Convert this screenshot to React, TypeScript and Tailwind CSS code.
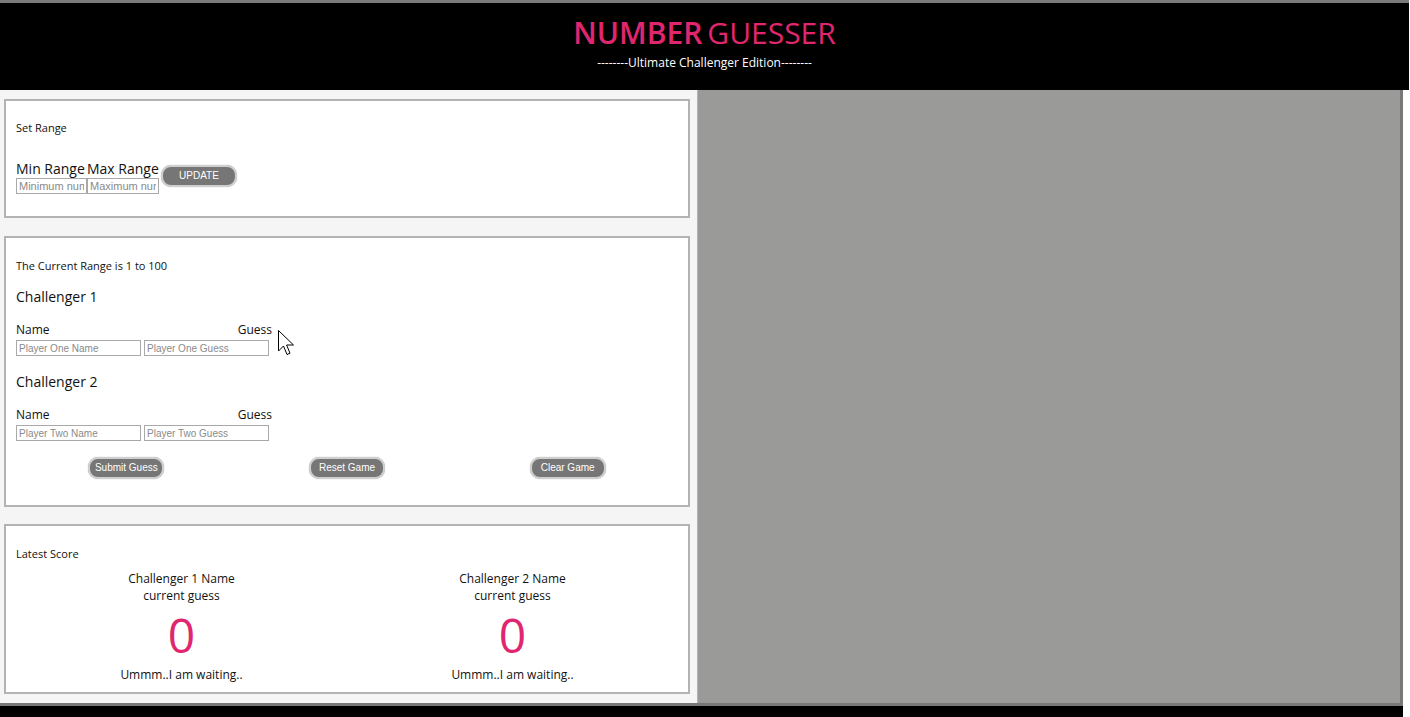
import React from 'react';

const inputCls =
  "h-[16px] border border-[#a9a9a9] bg-white px-[2px] font-['Liberation_Sans',Arial,sans-serif] text-[10px] text-[#222] outline-none placeholder:text-[#8a8a8a]";

const btnCls =
  "h-[22px] w-[76px] rounded-[10px] border-2 border-[#cfcfcf] bg-[#767676] font-['Liberation_Sans',Arial,sans-serif] text-[10px] leading-none text-white shadow-[0_0_1px_#999]";

function Cursor() {
  return (
    <svg
      className="absolute left-[278px] top-[330px]"
      width="17"
      height="26"
      viewBox="0 0 17 26"
    >
      <path
        d="M0.5 0.5 L0.5 21 L5.5 16 L9 24.5 L12 23.2 L8.6 15 L15.5 15 Z"
        fill="#fff"
        stroke="#000"
        strokeWidth="1"
        strokeLinejoin="miter"
      />
    </svg>
  );
}

function Challenger({ title, who }: { title: string; who: string }) {
  return (
    <div>
      <h3 className="text-[14px] leading-[20px]">{title}</h3>
      <div className="mt-[15px] flex w-[256px] justify-between text-[12px] font-medium leading-[16px]">
        <span>Name</span>
        <span>Guess</span>
      </div>
      <div className="mt-[2px] flex gap-[3px]">
        <input className={`${inputCls} w-[125px]`} placeholder={`Player ${who} Name`} />
        <input className={`${inputCls} w-[125px]`} placeholder={`Player ${who} Guess`} />
      </div>
    </div>
  );
}

function ScoreColumn({ name }: { name: string }) {
  return (
    <div className="flex flex-col items-center">
      <p className="text-[12px] font-medium leading-[16px]">{name}</p>
      <p className="mt-[1px] text-[12px] leading-[16px]">current guess</p>
      <p className="mt-[7px] text-[48px] leading-[48px] text-[#e0266f]">0</p>
      <p className="mt-[8px] text-[12px] leading-[16px]">Ummm..I am waiting..</p>
    </div>
  );
}

export default function App() {
  return (
    <div className="relative min-h-[717px] w-[1410px] bg-white font-['Open_Sans',sans-serif] text-[#111]">
      <div className="h-[3px] w-[1409px] bg-[#7b7b7b]" />

      {/* Header */}
      <header className="flex h-[87px] w-[1409px] flex-col items-center bg-black">
        <h1 className="mt-[10px] text-[30px] leading-[40px] text-[#e0266f]">
          <span className="font-semibold">NUMBER</span>
          <span className="ml-[5px]">GUESSER</span>
        </h1>
        <p className="mt-[2px] text-[12px] leading-[16px] text-white">
          --------Ultimate Challenger Edition--------
        </p>
      </header>

      <div className="flex h-[616px] w-[1403px] border-r-[3px] border-b-[3px] border-[#787878]">
        {/* Left column */}
        <div className="w-[697px] bg-[#f5f5f5] pt-[9px]">
          {/* Set range */}
          <section className="ml-[4px] h-[119px] w-[686px] border-2 border-[#b3b3b3] bg-white px-[10px] pt-[19px]">
            <h2 className="text-[11px] leading-[16px]">Set Range</h2>
            <div className="mt-[23px] flex items-start">
              <div className="flex w-[71px] flex-col">
                <label className="whitespace-nowrap text-[14px] leading-[19px]">Min Range</label>
                <input className={`${inputCls} h-[15px] w-[71px] text-[11px]`} placeholder="Minimum number" />
              </div>
              <div className="flex w-[72px] flex-col">
                <label className="whitespace-nowrap text-[14px] leading-[19px]">Max Range</label>
                <input className={`${inputCls} h-[15px] w-[72px] text-[11px]`} placeholder="Maximum number" />
              </div>
              <button className={`${btnCls} ml-[2px] mt-[6px]`}>UPDATE</button>
            </div>
          </section>

          {/* Game */}
          <section className="ml-[4px] mt-[18px] h-[271px] w-[686px] border-2 border-[#b3b3b3] bg-white px-[10px] pt-[20px]">
            <h2 className="text-[11px] leading-[16px]">The Current Range is 1 to 100</h2>
            <div className="mt-[13px]">
              <Challenger title="Challenger 1" who="One" />
            </div>
            <div className="mt-[16px]">
              <Challenger title="Challenger 2" who="Two" />
            </div>
            <div className="mt-[16px] flex justify-around">
              <button className={btnCls}>Submit Guess</button>
              <button className={btnCls}>Reset Game</button>
              <button className={btnCls}>Clear Game</button>
            </div>
          </section>

          {/* Latest score */}
          <section className="ml-[4px] mt-[17px] h-[170px] w-[686px] border-2 border-[#b3b3b3] bg-white px-[10px] pt-[20px]">
            <h2 className="text-[11px] leading-[16px]">Latest Score</h2>
            <div className="mt-[9px] grid grid-cols-2">
              <ScoreColumn name="Challenger 1 Name" />
              <ScoreColumn name="Challenger 2 Name" />
            </div>
          </section>
        </div>

        {/* Right panel */}
        <div className="flex-1 border-l border-[#b4b4b4] bg-[#9a9b99]" />
      </div>

      <div className="h-[11px] w-[1403px] bg-black" />

      <Cursor />
    </div>
  );
}
